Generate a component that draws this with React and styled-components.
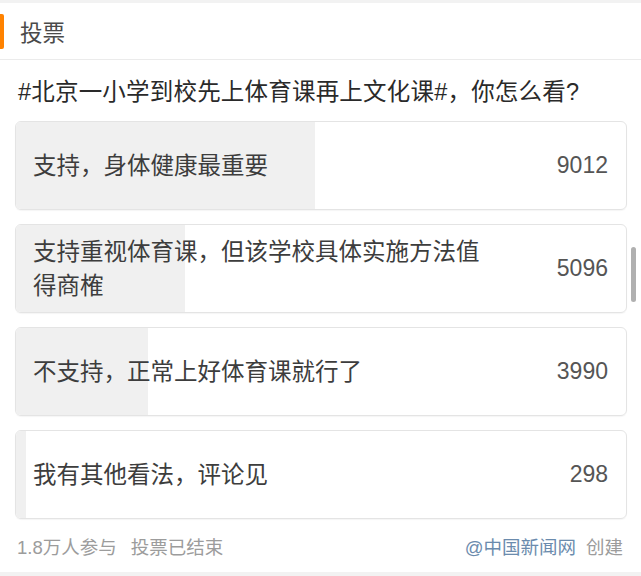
import styled, { createGlobalStyle } from "styled-components";

const GlobalStyle = createGlobalStyle`
  html, body {
    margin: 0;
    padding: 0;
    background: #fff;
  }
  body {
    font-family: "Liberation Sans", "Noto Sans CJK SC", sans-serif;
    color: #333;
  }
`;

const Page = styled.div`
  position: relative;
  width: 641px;
  height: 576px;
  background: #fff;
  border-top: 3px solid #f2f2f2;
  box-sizing: border-box;
  display: flex;
  flex-direction: column;
`;

const Header = styled.div`
  height: 57px;
  display: flex;
  align-items: center;
  border-bottom: 1px solid #ebebeb;
  box-sizing: border-box;
`;

const Mark = styled.span`
  width: 4px;
  height: 35px;
  background: #ff8200;
  border-radius: 0 2px 2px 0;
  margin-right: 16px;
`;

const HeaderTitle = styled.span`
  font-size: 22.5px;
  color: #4a4a4a;
`;

const Question = styled.div`
  font-size: 23.5px;
  letter-spacing: 0.2px;
  line-height: 30px;
  color: #2a2a2a;
  padding: 17px 18px 0;
  margin-bottom: 14px;
`;

const List = styled.div`
  display: flex;
  flex-direction: column;
  gap: 14px;
  padding: 0 14px 0 15px;
`;

const Option = styled.div`
  position: relative;
  height: 89px;
  border: 1px solid #e4e4e4;
  border-radius: 6px;
  box-sizing: border-box;
  overflow: hidden;
  display: flex;
  align-items: center;
  justify-content: space-between;
  padding: 0 18px 0 17px;
  box-shadow: 0 1px 1px rgba(0, 0, 0, 0.04);
`;

const Fill = styled.div`
  position: absolute;
  left: 0;
  top: 0;
  bottom: 0;
  background: #f0f0f0;
`;

const Label = styled.span`
  position: relative;
  font-size: 23.5px;
  line-height: 34px;
  color: #3d3d3d;
  max-width: 460px;
`;

const Count = styled.span`
  position: relative;
  font-size: 23px;
  color: #555;
`;

const Footer = styled.div`
  display: flex;
  justify-content: space-between;
  align-items: center;
  height: 53px;
  padding: 0 18px 0 17px;
  font-size: 18.5px;
  color: #9c9c9c;
`;

const Meta = styled.div`
  display: flex;
  gap: 14px;
`;

const Creator = styled.div`
  display: flex;
  gap: 10px;
`;

const Author = styled.span`
  color: #6b8bad;
`;

const BottomStrip = styled.div`
  flex: 1;
  background: #f2f2f2;
`;

const ScrollThumb = styled.div`
  position: absolute;
  left: 631px;
  top: 244px;
  width: 5px;
  height: 55px;
  border-radius: 3px;
  background: #b0b0b0;
`;

const options = [
  { label: "支持，身体健康最重要", count: 9012 },
  { label: "支持重视体育课，但该学校具体实施方法值得商榷", count: 5096 },
  { label: "不支持，正常上好体育课就行了", count: 3990 },
  { label: "我有其他看法，评论见", count: 298 },
];

const total = options.reduce((s, o) => s + o.count, 0);

export default function App() {
  return (
    <>
      <GlobalStyle />
      <Page>
        <Header>
          <Mark />
          <HeaderTitle>投票</HeaderTitle>
        </Header>
        <Question>#北京一小学到校先上体育课再上文化课#，你怎么看?</Question>
        <List>
          {options.map((o) => (
            <Option key={o.label}>
              <Fill style={{ width: `${(o.count / total) * 100}%` }} />
              <Label>{o.label}</Label>
              <Count>{o.count}</Count>
            </Option>
          ))}
        </List>
        <Footer>
          <Meta>
            <span>1.8万人参与</span>
            <span>投票已结束</span>
          </Meta>
          <Creator>
            <Author>@中国新闻网</Author>
            <span>创建</span>
          </Creator>
        </Footer>
        <BottomStrip />
        <ScrollThumb />
      </Page>
    </>
  );
}
